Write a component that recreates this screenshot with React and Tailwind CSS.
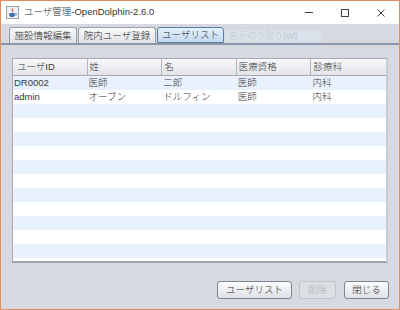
import React from "react";

const F = { fontFamily: '"Liberation Sans", "Noto Sans CJK JP", sans-serif' };

function Tab({ children, active, w }) {
  return (
    <div
      className={
        "h-[16px] flex items-center justify-center text-[9.5px] leading-none rounded-t-[3px] border font-light " +
        (active
          ? "border-[#5a7ca6] bg-gradient-to-b from-[#e4f0fb] to-[#c3d9ef] text-[#2a2a2a]"
          : "border-[#9aa0a8] border-b-0 bg-gradient-to-b from-[#fbfbfb] to-[#e0e2e6] text-[#2a2a2a]")
      }
      style={{ width: w }}
    >
      {children}
    </div>
  );
}

function Btn({ children, w, disabled }) {
  return (
    <div
      className={
        "h-[18px] flex items-center justify-center text-[9.5px] font-light rounded-[3px] border " +
        (disabled
          ? "border-[#c2c6cc] bg-[#dcdfe4] text-[#aeb2b8]"
          : "border-[#7d8690] bg-gradient-to-b from-[#fdfdfd] to-[#dee1e6] text-[#2a2a2a]")
      }
      style={{ width: w }}
    >
      {children}
    </div>
  );
}

const cols = ["ユーザID", "姓", "名", "医療資格", "診療科"];
const rows = [
  ["DR0002", "医師", "二郎", "医師", "内科"],
  ["admin", "オーブン", "ドルフィン", "医師", "内科"],
];

export default function App() {
  const blank = Array.from({ length: 13 });
  return (
    <div className="w-[400px] h-[310px] flex flex-col border border-[#e38b5e] bg-[#d6d9e0] overflow-hidden" style={F}>
      {/* Title bar */}
      <div className="h-[23px] bg-white flex items-center shrink-0">
        <div className="w-[13px] h-[13px] ml-[5px] border border-[#9aa2aa] bg-[#eef1f4] flex items-center justify-center">
          <svg width="9" height="10" viewBox="0 0 10 11">
            <path d="M5 0.5 C3.5 2 6.5 3 5 4.5" stroke="#d24b2a" strokeWidth="1.2" fill="none" />
            <path d="M1.5 5.5 h6 v2.5 a2 2 0 0 1 -2 2 h-2 a2 2 0 0 1 -2 -2z" fill="#3f6fb0" />
            <path d="M7.5 6 h1 a1 1 0 0 1 0 2 h-1" stroke="#3f6fb0" strokeWidth="0.8" fill="none" />
          </svg>
        </div>
        <div className="ml-[5px] text-[9.5px] text-[#333] font-light">ユーザ管理-OpenDolphin-2.6.0</div>
        <div className="flex-1" />
        <div className="w-[36px] flex justify-center">
          <div className="w-[8px] h-[1px] bg-[#444]" />
        </div>
        <div className="w-[36px] flex justify-center">
          <div className="w-[8px] h-[8px] border border-[#444]" />
        </div>
        <div className="w-[36px] flex justify-center">
          <svg width="8" height="8" viewBox="0 0 8 8">
            <path d="M0.5 0.5 L7.5 7.5 M7.5 0.5 L0.5 7.5" stroke="#444" strokeWidth="1" />
          </svg>
        </div>
      </div>

      {/* Tabs */}
      <div className="h-[16px] mt-[3px] pl-[8px] flex items-end gap-[1px] shrink-0">
        <Tab w={68}>施設情報編集</Tab>
        <Tab w={78}>院内ユーザ登録</Tab>
        <Tab w={67} active>ユーザリスト</Tab>
        <div className="h-[12px] w-[97px] mb-[1px] bg-[#d9e1ea] text-[9px] leading-[12px] text-[#c2c9d3] pl-[4px] font-light">表示切り取り(W)</div>
      </div>
      <div className="h-[2px] bg-[#8b98a9] shrink-0" />

      {/* Table */}
      <div className="mt-[13px] mx-[11px] h-[205px] shrink-0 border-l border-t border-[#a6abb3] border-b-[2px] border-r-[2px] border-b-[#a2a6ad] border-r-[#c9ccd2] bg-white flex flex-col overflow-hidden">
        <div className="h-[17px] flex shrink-0 bg-gradient-to-b from-[#f8f8f9] to-[#e2e4e7] border-b border-[#a6abb3]">
          {cols.map((c, i) => (
            <div
              key={i}
              className={
                "w-[75px] flex items-center text-[9.5px] text-[#3a3a3a] font-light " +
                (i === 0 ? "pl-[4px] " : "pl-[2px] ") +
                (i < 4 ? "border-r border-[#b3b7bd]" : "")
              }
            >
              {c}
            </div>
          ))}
        </div>
        {rows.map((r, ri) => (
          <div key={ri} className={"h-[14px] flex shrink-0 " + (ri % 2 === 0 ? "bg-[#e9f1fc]" : "bg-white")}>
            {r.map((c, i) => (
              <div key={i} className="w-[75px] pl-[1px] flex items-center text-[9.5px] text-[#3a3a3a] leading-none font-light">
                {c}
              </div>
            ))}
          </div>
        ))}
        {blank.map((_, i) => (
          <div key={i} className={"h-[14px] shrink-0 " + (i % 2 === 0 ? "bg-[#e9f1fc]" : "bg-white")} />
        ))}
      </div>

      {/* Buttons */}
      <div className="mt-[18px] flex justify-end pr-[10px] gap-[7px]">
        <Btn w={75}>ユーザリスト</Btn>
        <Btn w={37} disabled>削除</Btn>
        <div className="ml-[1px]">
          <Btn w={45}>閉じる</Btn>
        </div>
      </div>
    </div>
  );
}
